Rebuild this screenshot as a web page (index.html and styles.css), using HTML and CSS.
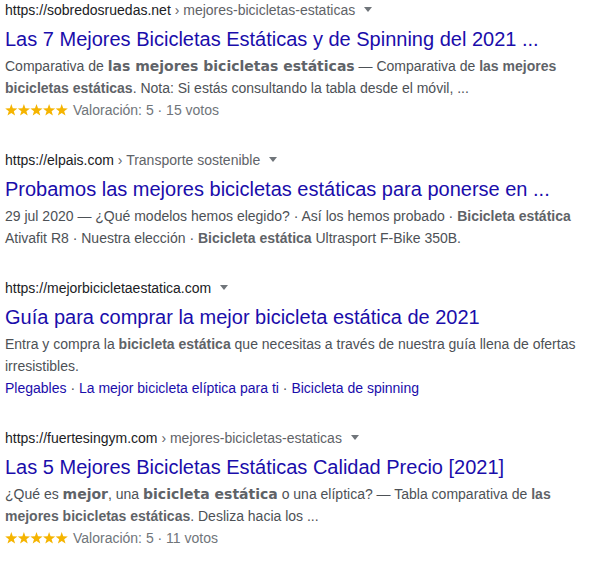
FILE: index.html
```html
<!DOCTYPE html>
<html lang="es">

<head>
    <meta charset="UTF-8">
    <meta name="viewport" content="width=device-width, initial-scale=1.0">
    <title>bicicleta estática - Buscar</title>
    <link rel="stylesheet" href="styles.css">
</head>

<body>
    <div class="results">
        <div class="result">
            <div class="result-url">https://sobredosruedas.net<span class="crumb"> › mejores-bicicletas-estaticas</span><span class="arrow"></span></div>
            <a class="result-title" href="#">Las 7 Mejores Bicicletas Estáticas y de Spinning del 2021 ...</a>
            <div class="snippet">Comparativa de <b class="wide">las mejores bicicletas estáticas</b> — Comparativa de <b>las mejores bicicletas estáticas</b>. Nota: Si estás consultando la tabla desde el móvil, ...</div>
            <div class="rating">
                <svg class="stars" width="63" height="12" viewBox="0 0 63 12">
                    <g fill="#f5b400">
                        <polygon points="6.3,0 7.8,4.3 12.4,4.4 8.8,7.2 10.1,11.6 6.3,9 2.5,11.6 3.8,7.2 0.2,4.4 4.8,4.3" />
                        <polygon transform="translate(12.6 0)" points="6.3,0 7.8,4.3 12.4,4.4 8.8,7.2 10.1,11.6 6.3,9 2.5,11.6 3.8,7.2 0.2,4.4 4.8,4.3" />
                        <polygon transform="translate(25.2 0)" points="6.3,0 7.8,4.3 12.4,4.4 8.8,7.2 10.1,11.6 6.3,9 2.5,11.6 3.8,7.2 0.2,4.4 4.8,4.3" />
                        <polygon transform="translate(37.8 0)" points="6.3,0 7.8,4.3 12.4,4.4 8.8,7.2 10.1,11.6 6.3,9 2.5,11.6 3.8,7.2 0.2,4.4 4.8,4.3" />
                        <polygon transform="translate(50.4 0)" points="6.3,0 7.8,4.3 12.4,4.4 8.8,7.2 10.1,11.6 6.3,9 2.5,11.6 3.8,7.2 0.2,4.4 4.8,4.3" />
                    </g>
                </svg>Valoración: 5 · 15 votos
            </div>
        </div>

        <div class="result">
            <div class="result-url">https://elpais.com<span class="crumb"> › Transporte sostenible</span><span class="arrow"></span></div>
            <a class="result-title" href="#">Probamos las mejores bicicletas estáticas para ponerse en ...</a>
            <div class="snippet">29 jul 2020 — ¿Qué modelos hemos elegido? · Así los hemos probado · <b>Bicicleta estática</b> Ativafit R8 · Nuestra elección · <b>Bicicleta estática</b> Ultrasport F-Bike 350B.</div>
        </div>

        <div class="result">
            <div class="result-url">https://mejorbicicletaestatica.com<span class="arrow"></span></div>
            <a class="result-title" href="#">Guía para comprar la mejor bicicleta estática de 2021</a>
            <div class="snippet">Entra y compra la <b>bicicleta estática</b> que necesitas a través de nuestra guía llena de ofertas irresistibles.</div>
            <div class="sitelinks">
                <a href="#">Plegables</a> · <a href="#">La mejor bicicleta elíptica para ti</a> · <a href="#">Bicicleta de spinning</a>
            </div>
        </div>

        <div class="result">
            <div class="result-url">https://fuertesingym.com<span class="crumb"> › mejores-bicicletas-estaticas</span><span class="arrow"></span></div>
            <a class="result-title" href="#">Las 5 Mejores Bicicletas Estáticas Calidad Precio [2021]</a>
            <div class="snippet">¿Qué es <b class="wide">mejor</b>, una <b class="wide">bicicleta estática</b> o una elíptica? — Tabla comparativa de <b>las mejores bicicletas estáticas</b>. Desliza hacia los ...</div>
            <div class="rating">
                <svg class="stars" width="63" height="12" viewBox="0 0 63 12">
                    <g fill="#f5b400">
                        <polygon points="6.3,0 7.8,4.3 12.4,4.4 8.8,7.2 10.1,11.6 6.3,9 2.5,11.6 3.8,7.2 0.2,4.4 4.8,4.3" />
                        <polygon transform="translate(12.6 0)" points="6.3,0 7.8,4.3 12.4,4.4 8.8,7.2 10.1,11.6 6.3,9 2.5,11.6 3.8,7.2 0.2,4.4 4.8,4.3" />
                        <polygon transform="translate(25.2 0)" points="6.3,0 7.8,4.3 12.4,4.4 8.8,7.2 10.1,11.6 6.3,9 2.5,11.6 3.8,7.2 0.2,4.4 4.8,4.3" />
                        <polygon transform="translate(37.8 0)" points="6.3,0 7.8,4.3 12.4,4.4 8.8,7.2 10.1,11.6 6.3,9 2.5,11.6 3.8,7.2 0.2,4.4 4.8,4.3" />
                        <polygon transform="translate(50.4 0)" points="6.3,0 7.8,4.3 12.4,4.4 8.8,7.2 10.1,11.6 6.3,9 2.5,11.6 3.8,7.2 0.2,4.4 4.8,4.3" />
                    </g>
                </svg>Valoración: 5 · 11 votos
            </div>
        </div>
    </div>
</body>

</html>
```

FILE: styles.css
```css
body {
    margin: 0;
    background-color: #fff;
    font-family: "Liberation Sans", Arial, sans-serif;
}

.results {
    padding: 0 5px;
    width: 580px;
}

.result {
    margin-bottom: 29px;
}

.result-url {
    font-size: 14px;
    line-height: 20px;
    color: #202124;
}

.result-url .crumb {
    color: #5f6368;
}

.arrow {
    display: inline-block;
    margin-left: 9px;
    border-left: 4px solid transparent;
    border-right: 4px solid transparent;
    border-top: 5px solid #70757a;
    vertical-align: 3px;
}

.result-title {
    display: block;
    padding-top: 6px;
    margin-bottom: 3px;
    font-size: 20px;
    line-height: 26px;
    color: #1a0dab;
    text-decoration: none;
}

.snippet {
    font-size: 14px;
    line-height: 22px;
    color: #4d5156;
}

.snippet b {
    color: #5f6368;
}

.snippet b.wide {
    font-family: "DejaVu Sans", Verdana, sans-serif;
}

.rating {
    font-size: 14px;
    line-height: 22px;
    color: #70757a;
}

.stars {
    margin-right: 5px;
    vertical-align: -1px;
}

.sitelinks {
    font-size: 14px;
    line-height: 22px;
    color: #4d5156;
}

.sitelinks a {
    color: #1a0dab;
    text-decoration: none;
}
```
